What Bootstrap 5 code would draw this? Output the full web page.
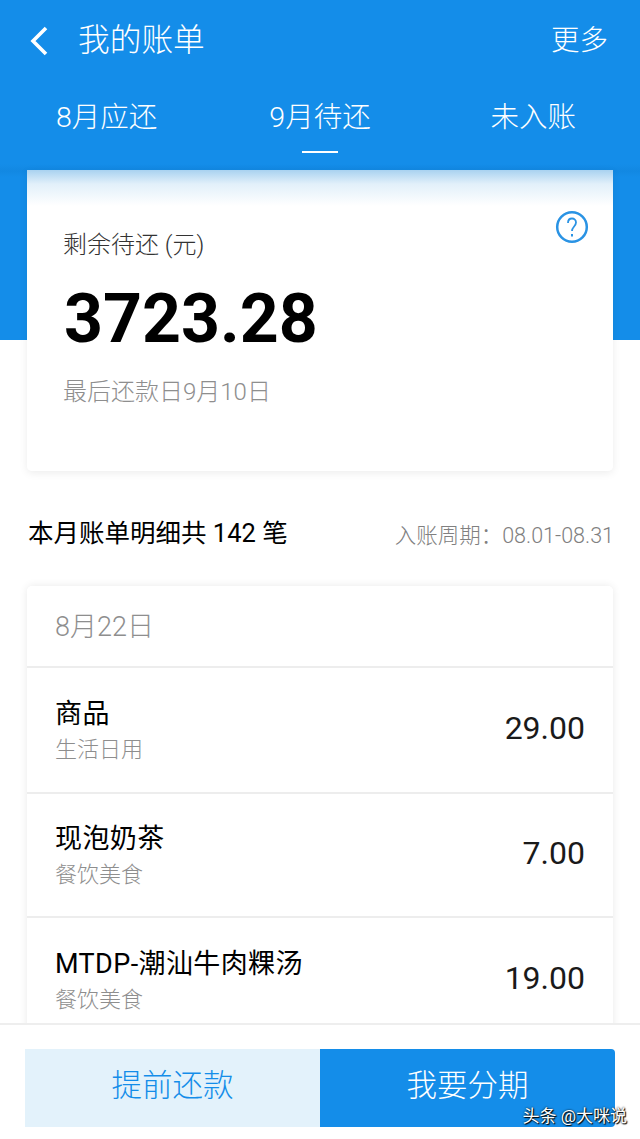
<!doctype html>
<html lang="zh-CN">

<head>
    <meta charset="UTF-8">
    <meta name="viewport" content="width=device-width, initial-scale=1.0">
    <title>我的账单</title>
    <link href="https://cdn.jsdelivr.net/npm/bootstrap@5.3.3/dist/css/bootstrap.min.css" rel="stylesheet">
    <style>
        html, body {
            height: 100%;
        }

        body {
            background-color: #fff;
            font-family: Roboto, "Noto Sans CJK SC", sans-serif;
            color: #000;
            overflow: hidden;
        }

        .bill-page {
            height: 1139px;
        }

        .bill-scroll {
            min-height: 0;
            overflow: hidden;
        }

        /* blue header */
        .bill-hero {
            background: linear-gradient(#148de9 164px, #1288e2 171px, #148de9 177px);
            height: 340px;
            color: #fff;
        }

        .bill-topbar {
            height: 80px;
            padding: 2px 32px 0 27px;
        }

        .bill-back {
            width: 22px;
            height: 32px;
            margin-right: 29px;
        }

        .bill-title {
            font-size: 31.700px;
            font-weight: 300;
        }

        .bill-more {
            font-size: 28.500px;
            font-weight: 300;
        }

        .bill-tabs {
            margin-top: 17px;
            font-size: 28.500px;
            font-weight: 300;
            line-height: 42px;
        }

        .bill-tab-line {
            width: 36px;
            height: 2px;
            background-color: #fff;
            margin: 12px auto 0;
        }

        /* summary card */
        .bill-summary {
            height: 301px;
            margin: -170px 27px 0;
            padding: 57px 37px 0;
            border: 0;
            border-radius: 0 0 5px 5px;
            background: linear-gradient(#a9d2f0 0, #e2f0fa 14px, #fff 36px);
            box-shadow: 0 2px 8px rgba(0, 0, 0, .08);
        }

        .bill-help {
            top: 40px;
            right: 24px;
            width: 34px;
            height: 34px;
        }

        .bill-summary-label {
            font-size: 24px;
            font-weight: 300;
            line-height: 36px;
            color: #333;
            margin-left: -1px;
        }

        .bill-amount {
            font-size: 68px;
            font-weight: 700;
            line-height: 80px;
            color: #000;
            margin-top: 16px;
        }

        .bill-due {
            font-size: 24px;
            font-weight: 300;
            line-height: 32px;
            color: #8e8e8e;
            margin-top: 17px;
            margin-left: -1px;
        }

        /* list heading */
        .bill-heading {
            margin: 43px 26px 0 28px;
            height: 38px;
        }

        .bill-count {
            font-size: 25.500px;
        }

        .bill-period {
            font-size: 21.500px;
            font-weight: 300;
            color: #808080;
            margin-top: 6px;
        }

        /* list card */
        .bill-list {
            margin: 34px 27px 0;
            border: 0;
            border-radius: 5px;
            box-shadow: 0 0 8px rgba(0, 0, 0, .09);
        }

        .bill-list .list-group-item {
            padding: 0 28px;
            border-color: #ededed;
            border-width: 0 0 2px;
        }

        .bill-list .bill-date {
            height: 82px;
            padding-top: 3px;
            font-size: 27px;
            font-weight: 300;
            color: #8e8e8e;
        }

        .bill-row {
            height: 124px;
        }

        .bill-date + .bill-row {
            height: 126px;
        }

        .bill-name {
            font-size: 27px;
            letter-spacing: .4px;
            line-height: 36px;
            color: #000;
        }

        .bill-cat {
            font-size: 22px;
            line-height: 30px;
            font-weight: 300;
            color: #8e8e8e;
            margin-top: 3px;
        }

        .bill-price {
            font-size: 32px;
            color: #1a1a1a;
            margin-bottom: 4px;
        }

        /* bottom buttons */
        .bill-footer {
            height: 116px;
            padding: 24px 25px 12px;
            background-color: #fff;
            border-top: 2px solid #eee;
        }

        .bill-btn {
            flex: 1 1 0;
            height: 78px;
            font-size: 30.500px;
            font-weight: 300;
            border: 0;
            padding: 0 0 4px;
        }

        .bill-btn-light {
            background-color: #e3f2fb;
            color: #148de9;
            border-radius: 0;
        }

        .bill-btn-main {
            background-color: #148de9;
            color: #fff;
            border-radius: 0 4px 4px 0;
        }

        .bill-mark {
            right: 13px;
            bottom: 12px;
            font-size: 17px;
            line-height: 22px;
            color: #fff;
            text-shadow: 0 0 2px #000, 1px 1px 1px #000;
        }
    </style>
</head>

<body>
    <div class="bill-page d-flex flex-column position-relative">
        <div class="bill-scroll flex-grow-1">
            <div class="bill-hero">
                <div class="bill-topbar d-flex align-items-center">
                    <svg class="bill-back" viewBox="0 0 22 32" fill="none" stroke="#fff" stroke-width="3.600">
                        <path d="M19 3 6 16l13 13"/>
                    </svg>
                    <span class="bill-title">我的账单</span>
                    <span class="bill-more ms-auto">更多</span>
                </div>
                <div class="bill-tabs row g-0 text-center">
                    <div class="col-4">8月应还</div>
                    <div class="col-4">9月待还<div class="bill-tab-line"></div></div>
                    <div class="col-4">未入账</div>
                </div>
            </div>

            <div class="bill-summary card position-relative">
                <svg class="bill-help position-absolute" viewBox="0 0 34 34" fill="none" stroke="#2a93e4" stroke-width="2.500">
                    <circle cx="17" cy="17" r="14.800"/>
                    <path d="M13 13c0-2.800 1.800-4.500 4-4.500s4 1.700 4 4.100c0 3.700-4 4.200-4 8.400" stroke-width="1.800"/>
                    <path d="M17 24v2.500" stroke-width="2"/>
                </svg>
                <div class="bill-summary-label">剩余待还 (元)</div>
                <div class="bill-amount">3723.28</div>
                <div class="bill-due">最后还款日9月10日</div>
            </div>

            <div class="bill-heading d-flex justify-content-between align-items-center">
                <span class="bill-count">本月账单明细共 142 笔</span>
                <span class="bill-period">入账周期：08.01-08.31</span>
            </div>

            <div class="bill-list card">
                <ul class="list-group list-group-flush">
                    <li class="list-group-item bill-date d-flex align-items-center">8月22日</li>
                    <li class="list-group-item bill-row d-flex justify-content-between align-items-center">
                        <div>
                            <div class="bill-name">商品</div>
                            <div class="bill-cat">生活日用</div>
                        </div>
                        <span class="bill-price">29.00</span>
                    </li>
                    <li class="list-group-item bill-row d-flex justify-content-between align-items-center">
                        <div>
                            <div class="bill-name">现泡奶茶</div>
                            <div class="bill-cat">餐饮美食</div>
                        </div>
                        <span class="bill-price">7.00</span>
                    </li>
                    <li class="list-group-item bill-row d-flex justify-content-between align-items-center">
                        <div>
                            <div class="bill-name">MTDP-潮汕牛肉粿汤</div>
                            <div class="bill-cat">餐饮美食</div>
                        </div>
                        <span class="bill-price">19.00</span>
                    </li>
                </ul>
            </div>
        </div>

        <div class="bill-footer d-flex flex-shrink-0">
            <button type="button" class="btn bill-btn bill-btn-light">提前还款</button>
            <button type="button" class="btn bill-btn bill-btn-main">我要分期</button>
        </div>
        <span class="bill-mark position-absolute">头条 @大咪说</span>
    </div>

    <script src="https://cdn.jsdelivr.net/npm/bootstrap@5.3.3/dist/js/bootstrap.bundle.min.js"></script>
</body>

</html>
